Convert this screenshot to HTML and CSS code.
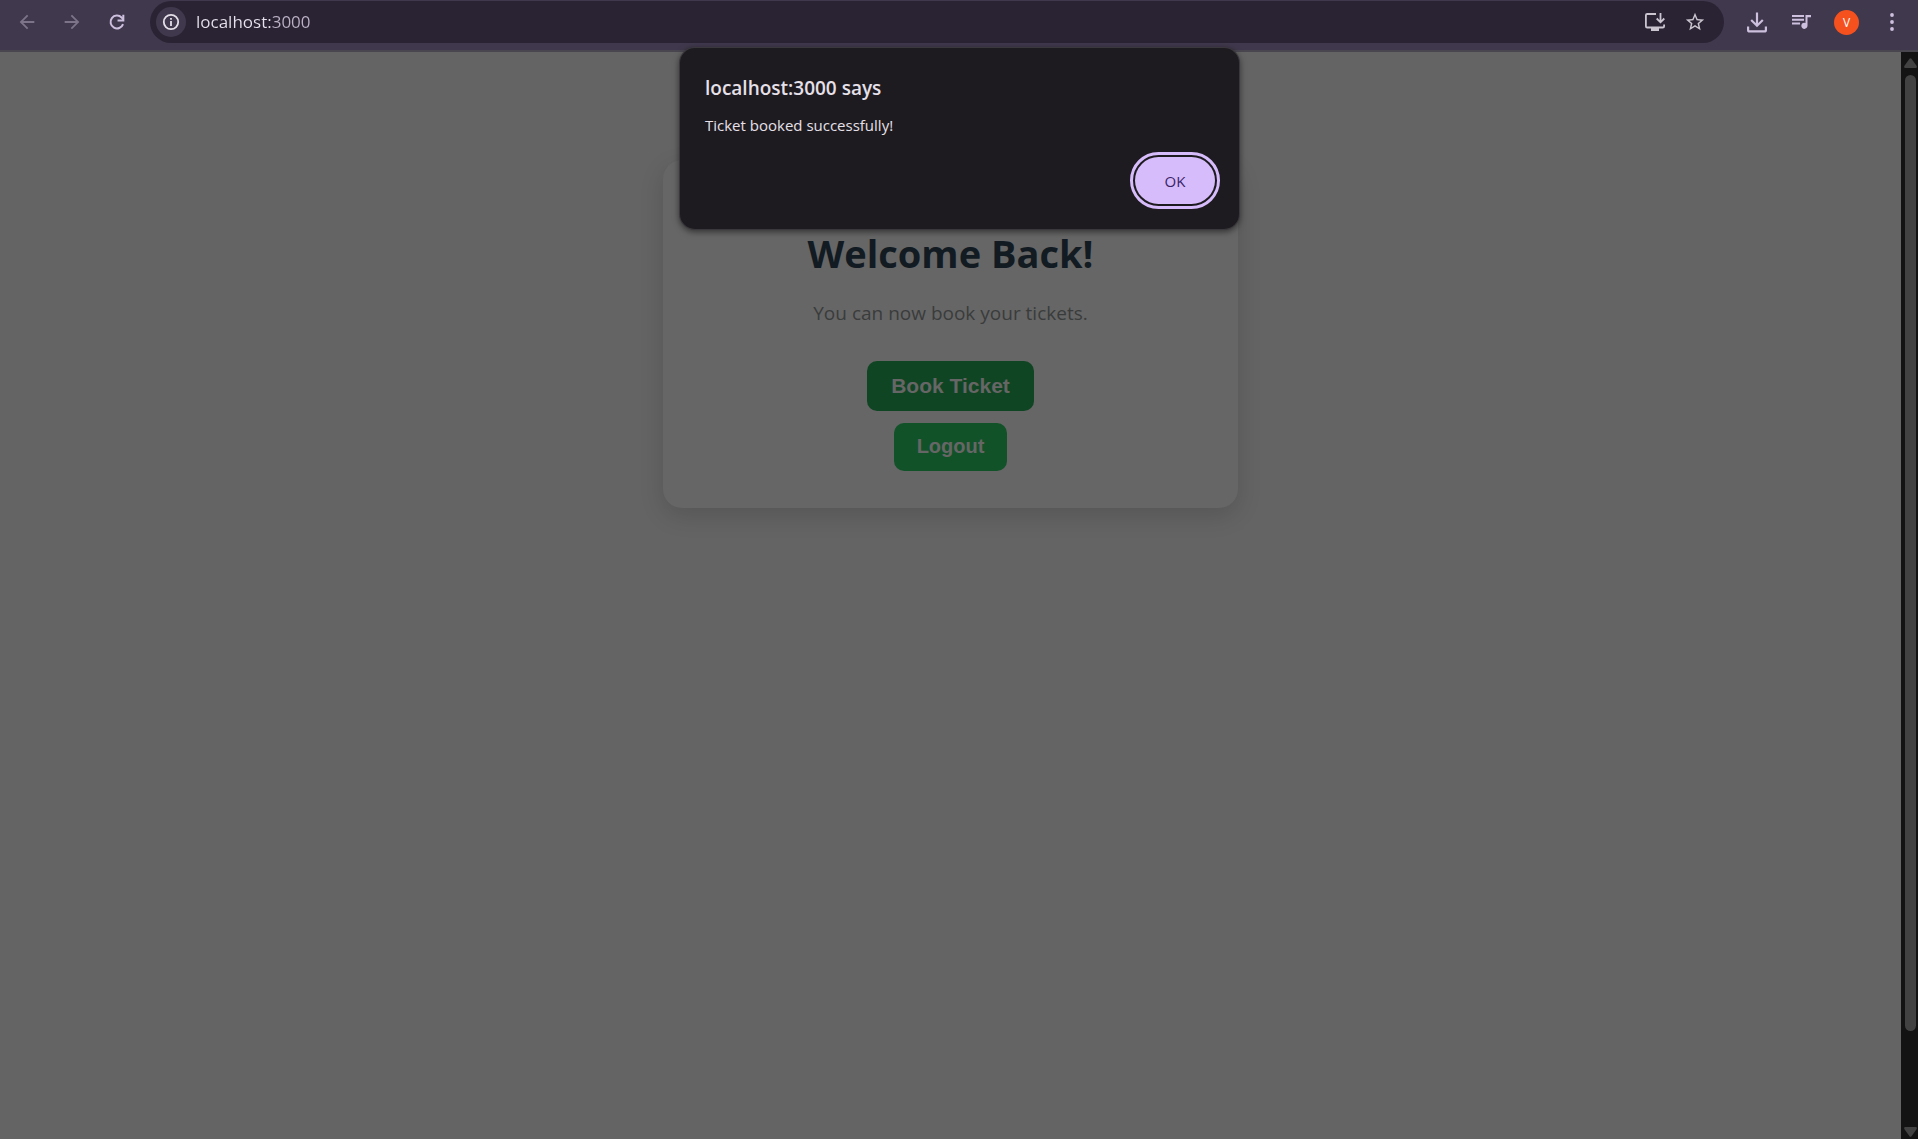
FILE: index.html
```html
<!DOCTYPE html>
<html lang="en">
<head>
<meta charset="utf-8">
<title>localhost:3000</title>
<link rel="stylesheet" href="styles.css">
</head>
<body>
<header class="toolbar">
  <button class="tool tool-dim" aria-label="Back"><svg width="22" height="22" viewBox="0 0 24 24"><path fill="currentColor" d="M20 11H7.83l5.59-5.59L12 4l-8 8 8 8 1.41-1.41L7.83 13H20z"/></svg></button>
  <button class="tool tool-dim" aria-label="Forward"><svg width="22" height="22" viewBox="0 0 24 24"><path fill="currentColor" d="M4 11h12.17l-5.59-5.59L12 4l8 8-8 8-1.41-1.41L16.17 13H4z"/></svg></button>
  <button class="tool" aria-label="Reload"><svg width="22" height="22" viewBox="0 0 24 24"><path fill="none" stroke="currentColor" stroke-width="2.2" d="M18.6 14.3A7 7 0 1 1 17 7.1L19 9.2"/><path fill="currentColor" d="M20 4v7.4h-7.4V9.2h5.2V4z"/></svg></button>
  <div class="omnibox">
    <button class="site-info" aria-label="View site information"><svg width="18" height="18" viewBox="0 0 18 18"><circle cx="9" cy="9" r="7.2" fill="none" stroke="currentColor" stroke-width="1.8"/><path fill="currentColor" d="M8.1 8h1.8v5H8.1zM8.1 5h1.8v1.8H8.1z"/></svg></button>
    <input class="address" type="text" aria-label="Address" value="localhost:3000">
    <button class="page-action" aria-label="Install app"><svg width="22" height="22" viewBox="0 0 22 22"><path fill="none" stroke="currentColor" stroke-width="1.8" d="M12 3H3.2Q1.9 3 1.9 4.300V15.200Q1.900 16.500 3.200 16.500H18.800Q20.100 16.500 20.100 15.200V13.500M16.500 2v9M12.700 7.500l3.800 3.800 3.800-3.800"/><path fill="currentColor" d="M7 16.500h8V20H7z"/></svg></button>
    <button class="page-action" aria-label="Bookmark this tab"><svg width="22" height="22" viewBox="0 0 24 24"><path fill="currentColor" d="M22 9.240l-7.190-.62L12 2 9.190 8.630 2 9.240l5.460 4.730L5.820 21 12 17.270 18.180 21l-1.630-7.030zM12 15.400l-3.760 2.270 1-4.280-3.320-2.880 4.380-.38L12 6.100l1.710 4.040 4.380.38-3.320 2.880 1 4.280z"/></svg></button>
  </div>
  <button class="tool" aria-label="Downloads"><svg width="22" height="22" viewBox="0 0 22 22"><path fill="none" stroke="currentColor" stroke-width="2.200" d="M11 1.500V14M5.200 9l5.800 5.800L16.800 9M2.100 15.500v3.400q0 1.500 1.500 1.500h14.800q1.500 0 1.500-1.500v-3.400"/></svg></button>
  <button class="tool" aria-label="Media controls"><svg width="22" height="22" viewBox="0 0 22 22"><path fill="currentColor" d="M1 4h12v1.900H1zM1 7.800h12v1.900H1zM1 11.600h8v1.900H1zM14.500 4H20v2.200h-3.500v8.600a3.100 3.100 0 1 1-2-2.900z"/></svg></button>
  <button class="tool" aria-label="Profile"><span class="avatar">V</span></button>
  <button class="tool" aria-label="Menu"><svg width="22" height="22" viewBox="0 0 22 22"><g fill="currentColor"><circle cx="11" cy="4" r="1.900"/><circle cx="11" cy="11" r="1.900"/><circle cx="11" cy="18" r="1.900"/></g></svg></button>
</header>
<div class="window">
  <main class="page">
    <section class="card">
      <h1 class="heading">Welcome Back!</h1>
      <p class="lead">You can now book your tickets.</p>
      <button class="action action-active">Book Ticket</button>
      <button class="action">Logout</button>
    </section>
  </main>
  <div class="scrollbar" aria-hidden="true">
    <svg width="13" height="10" viewBox="0 0 13 10"><path fill="#424242" d="M5.500.8q1-1.300 2 0L12.700 8q.6 2-1 2H1.300q-1.600 0-1-2z"/></svg>
    <div class="track"><div class="thumb"></div></div>
    <svg width="13" height="10" viewBox="0 0 13 10"><path fill="#424242" d="M5.500 9.200q1 1.300 2 0L12.700 2q.6-2-1-2H1.300Q-.3 0 .3 2z"/></svg>
  </div>
</div>
<div class="dialog" role="alertdialog" aria-labelledby="dialog-title" aria-describedby="dialog-message">
  <h2 class="dialog-title" id="dialog-title">localhost:3000 says</h2>
  <p class="dialog-message" id="dialog-message">Ticket booked successfully!</p>
  <button class="dialog-ok">OK</button>
</div>
</body>
</html>
```
FILE: styles.css
```css
* {
  box-sizing: border-box;
}

body {
  margin: 0;
  min-height: 100vh;
  display: flex;
  flex-direction: column;
  position: relative;
  background: #646464;
  font-family: "Open Sans", "Noto Sans", sans-serif;
}

h1, h2, p {
  margin: 0;
}

button {
  border: 0;
  padding: 0;
  background: none;
  font-family: inherit;
  cursor: pointer;
}

svg {
  display: block;
}

/* Browser toolbar */
.toolbar {
  display: flex;
  align-items: flex-start;
  height: 52px;
  padding: 1px 4px 0 4px;
  background: #40384c;
  border-bottom: 2px solid #4a4650;
}

.tool {
  display: flex;
  align-items: center;
  justify-content: center;
  width: 45px;
  height: 42px;
  color: #cdc0df;
}

.tool-dim {
  color: #7d748a;
}

.omnibox {
  flex: 1;
  display: flex;
  align-items: center;
  height: 42px;
  margin: 0 10px 0 11px;
  padding: 0 9px 0 6px;
  border-radius: 21px;
  background: #2a2334;
}

.site-info {
  display: flex;
  align-items: center;
  justify-content: center;
  width: 30px;
  height: 30px;
  border-radius: 50%;
  background: #40384c;
  color: #e3dee8;
}

.address {
  flex: 1;
  min-width: 0;
  margin-left: 10px;
  padding: 0;
  border: 0;
  outline: 0;
  font: 17px/24px "Open Sans", "Noto Sans", sans-serif;
  color: transparent;
  background: linear-gradient(90deg, #e8e2ee 75px, #bcb3c6 75px);
  -webkit-background-clip: text;
  background-clip: text;
}

.page-action {
  display: flex;
  align-items: center;
  justify-content: center;
  width: 40px;
  height: 40px;
  color: #cbc5d0;
}

.avatar {
  width: 25px;
  border-radius: 50%;
  background: #f4511e;
  color: #fff;
  font-size: 12px;
  line-height: 25px;
}

/* Page content, dimmed behind the dialog */
.window {
  flex: 1;
  display: flex;
}

.page {
  flex: 1;
  padding: 108px 20px 40px;
}

.card {
  display: flex;
  flex-direction: column;
  align-items: center;
  max-width: 575px;
  margin: 0 auto;
  padding: 66px 38px 37px;
  border-radius: 19px;
  background: #666;
  box-shadow: 0 8px 25px rgba(0, 0, 0, 0.14);
}

.heading {
  color: #121a22;
  font-size: 38px;
  line-height: 54px;
  font-weight: 700;
}

.lead {
  margin: 20px 0 34px;
  color: #3a3c3c;
  font-size: 19px;
  line-height: 27px;
}

.action {
  height: 48px;
  padding: 0 23px 2px;
  border-radius: 10px;
  background: #125229;
  color: #666;
  font: bold 20px/46px "Liberation Sans", Arial, sans-serif;
}

.action-active {
  height: 50px;
  margin-bottom: 12px;
  padding: 0 24px;
  background: #104523;
  font-size: 21px;
  line-height: 50px;
}

.scrollbar {
  display: flex;
  flex-direction: column;
  align-items: center;
  width: 17px;
  padding: 6px 0 2px 2px;
  background: #131313;
}

.track {
  flex: 1;
  width: 11px;
  padding: 7px 0 2px;
}

.thumb {
  height: 91%;
  border-radius: 6px;
  background: #424242;
}

/* Alert dialog */
.dialog {
  position: absolute;
  top: 48px;
  left: 50%;
  width: 559px;
  margin-left: -279px;
  display: flex;
  flex-direction: column;
  padding: 26px 24px 25px 25px;
  border-radius: 15px;
  background: #1e1b20;
  color: #e6e0e9;
  box-shadow: 0 0 0 1px #3b383d, 0 2px 6px 1px rgba(0, 0, 0, 0.5);
}

.dialog-title {
  font-size: 19px;
  line-height: 28px;
  font-weight: 600;
}

.dialog-message {
  margin: 13px 0 22px;
  font-size: 15px;
  line-height: 20px;
}

.dialog-ok {
  align-self: flex-end;
  width: 80px;
  height: 47px;
  border-radius: 24px;
  background: #d6bcfb;
  color: #3a2467;
  font-size: 15px;
  font-weight: 500;
  outline: 3px solid #d6bcfb;
  outline-offset: 2px;
}
```
